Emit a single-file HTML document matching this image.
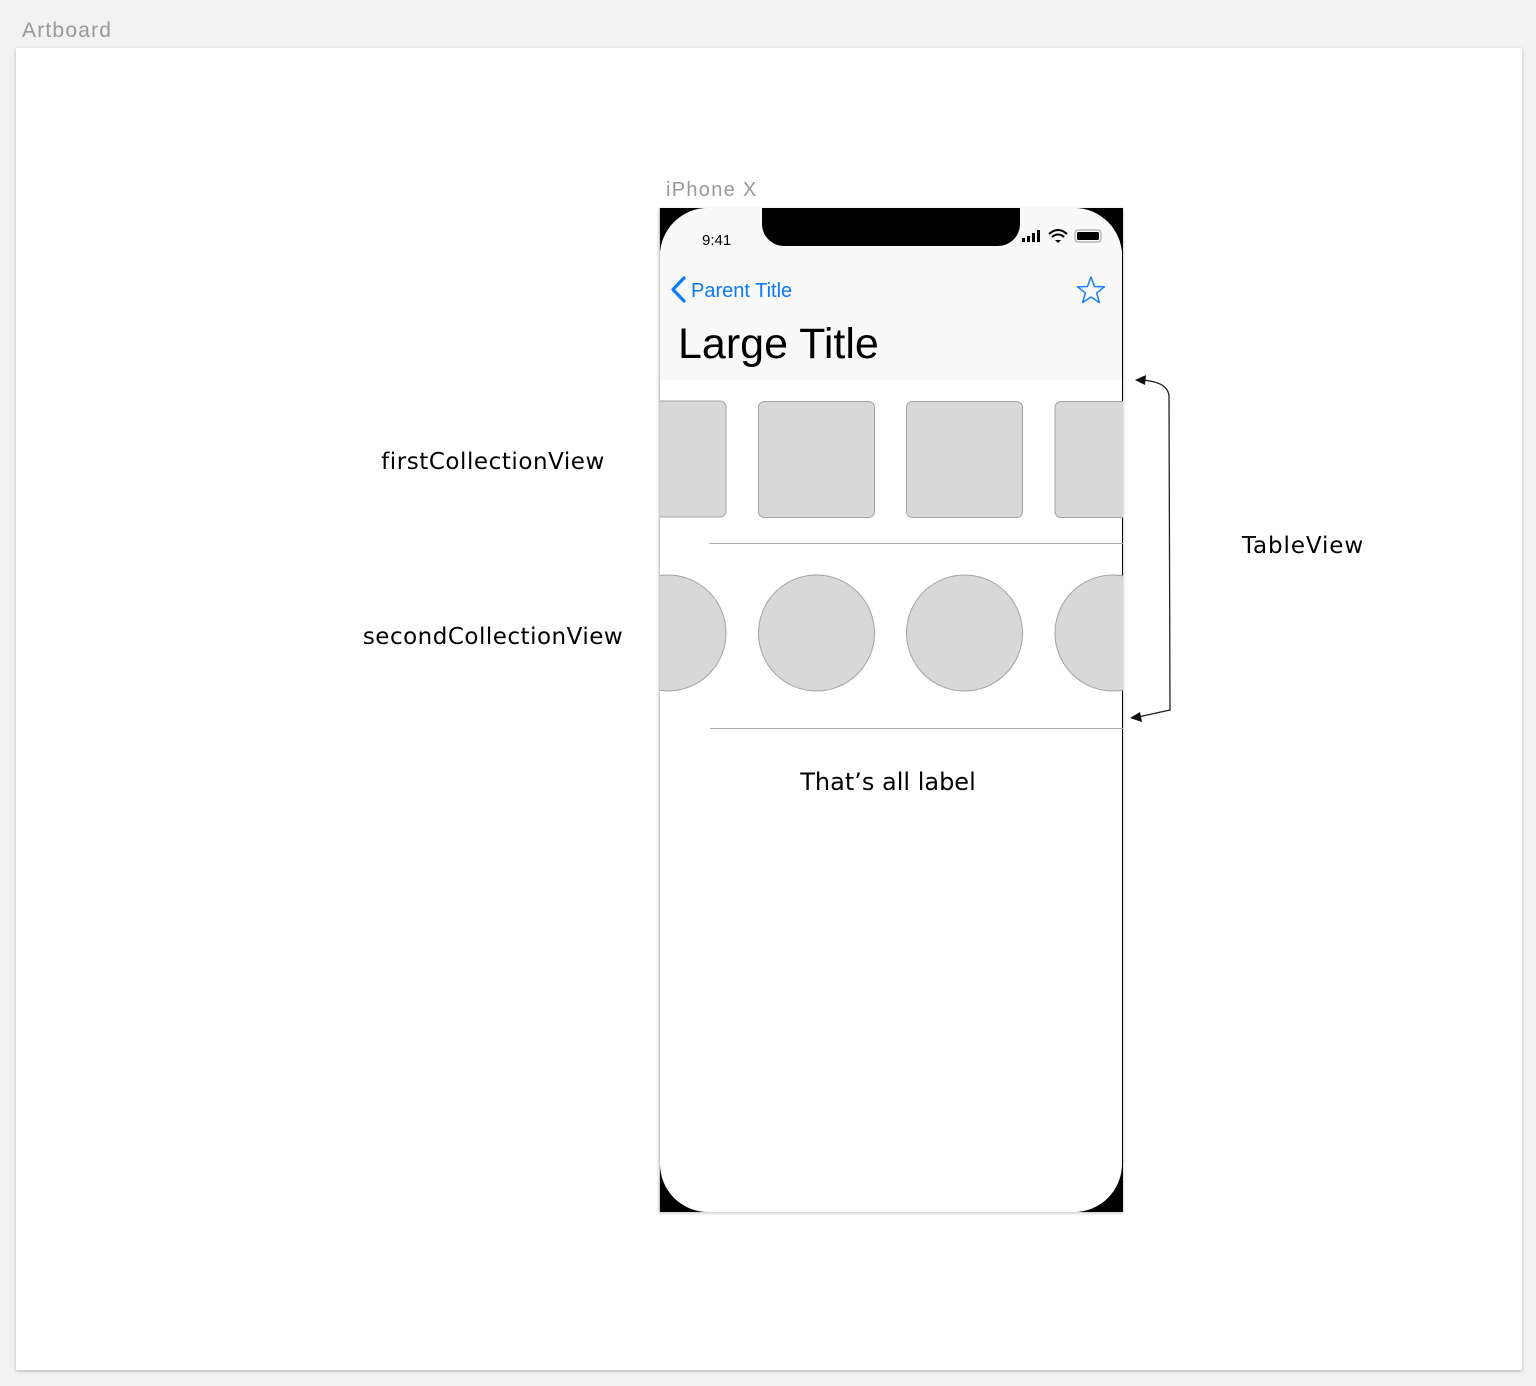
<!DOCTYPE html>
<html><head><style>
body{margin:0;width:1536px;height:1386px;background:#f2f2f2;overflow:hidden;font-family:"Liberation Sans",sans-serif}
</style></head><body>
<svg width="1536" height="1386" xmlns="http://www.w3.org/2000/svg" style="position:absolute;left:0;top:0">
<defs><clipPath id="scr"><rect x="659" y="208" width="464" height="1004"/></clipPath>
<filter id="sh" x="-5%" y="-5%" width="110%" height="110%"><feDropShadow dx="0" dy="1" stdDeviation="1.5" flood-opacity="0.25"/></filter></defs>
<text x="22" y="37" font-size="21" fill="#999" font-family="Liberation Sans" letter-spacing="1.2">Artboard</text>
<rect x="16" y="48" width="1506" height="1322" fill="#fff" filter="url(#sh)"/>
<text x="666" y="196" font-size="20" fill="#999" font-family="Liberation Sans" letter-spacing="1.3">iPhone X</text>
<rect x="659" y="208" width="464" height="1004" fill="#000" filter="url(#sh)"/>
<g clip-path="url(#scr)">
<rect x="660" y="208" width="462" height="1004" rx="48" fill="#fff"/>
<path d="M708 208 H1074 A48 48 0 0 1 1122 256 V380 H660 V256 A48 48 0 0 1 708 208Z" fill="#f9f9f9"/>
<path d="M762 208 H1020 V224 A22 22 0 0 1 998 246 H784 A22 22 0 0 1 762 224Z" fill="#000"/>
<text x="702" y="245" font-size="15" fill="#000">9:41</text>
<rect x="1022" y="238" width="3" height="4" fill="#000"/><rect x="1027" y="236" width="3" height="6" fill="#000"/><rect x="1032" y="233" width="3" height="9" fill="#000"/><rect x="1037" y="230" width="3" height="12" fill="#000"/>
<path d="M1049 234 Q1058 226 1067 234" stroke="#000" stroke-width="2" fill="none"/><path d="M1052 237 Q1058 232 1064 237" stroke="#000" stroke-width="2" fill="none"/><path d="M1055 240 L1058 243 L1061 240 Z" fill="#000"/>
<rect x="1075" y="230" width="26" height="12" rx="3" fill="none" stroke="#999" stroke-width="1"/><rect x="1077" y="232" width="22" height="8" rx="1.5" fill="#000"/>
<path d="M684 278 L673 289.5 L684 301" stroke="#0a7aff" stroke-width="3.2" fill="none" stroke-linecap="round" stroke-linejoin="round"/>
<text x="691" y="297" font-size="20" fill="#0a7aff">Parent Title</text>
<path d="M1091 277 L1094.5 286.5 L1104.5 286.8 L1096.6 293 L1099.4 302.6 L1091 297 L1082.6 302.6 L1085.4 293 L1077.5 286.8 L1087.5 286.5Z" fill="none" stroke="#0a7aff" stroke-width="1.4" stroke-linejoin="round"/>
<text x="678" y="358" font-size="43" fill="#000">Large Title</text>
<g fill="#d8d8d8" stroke="#a3a3a3" stroke-width="1">
<rect x="610" y="401" width="116" height="116" rx="6"/><rect x="758.5" y="401.5" width="116" height="116" rx="6"/><rect x="906.5" y="401.5" width="116" height="116" rx="6"/><rect x="1055" y="401.5" width="116" height="116" rx="6"/>
<circle cx="668" cy="633" r="58"/><circle cx="816.5" cy="633" r="58"/><circle cx="964.5" cy="633" r="58"/><circle cx="1113" cy="633" r="58"/>
</g>
<line x1="709" y1="543.5" x2="1123" y2="543.5" stroke="#aaa"/>
<line x1="710" y1="728.5" x2="1123" y2="728.5" stroke="#aaa"/>
</g>
<rect x="659" y="208" width="1" height="1004" fill="#ccc"/>
<text x="888" y="790" font-size="24" fill="#000" text-anchor="middle" font-family="DejaVu Sans" letter-spacing="0">That’s all label</text>
<text x="493" y="469" font-size="23" fill="#000" text-anchor="middle" font-family="DejaVu Sans" letter-spacing="0.55">firstCollectionView</text>
<text x="493" y="644" font-size="23" fill="#000" text-anchor="middle" font-family="DejaVu Sans" letter-spacing="0.5">secondCollectionView</text>
<text x="1303" y="553" font-size="23" fill="#000" text-anchor="middle" font-family="DejaVu Sans" letter-spacing="0.9">TableView</text>
<path d="M1142 380 Q1168 382 1169 396 L1170 710 L1138 717" fill="none" stroke="#222" stroke-width="1.3"/>
<path d="M1135 380 L1146 375 L1145 385Z" fill="#111"/>
<path d="M1130 718 L1140 712 L1142 722Z" fill="#111"/>
</svg>
</body></html>
